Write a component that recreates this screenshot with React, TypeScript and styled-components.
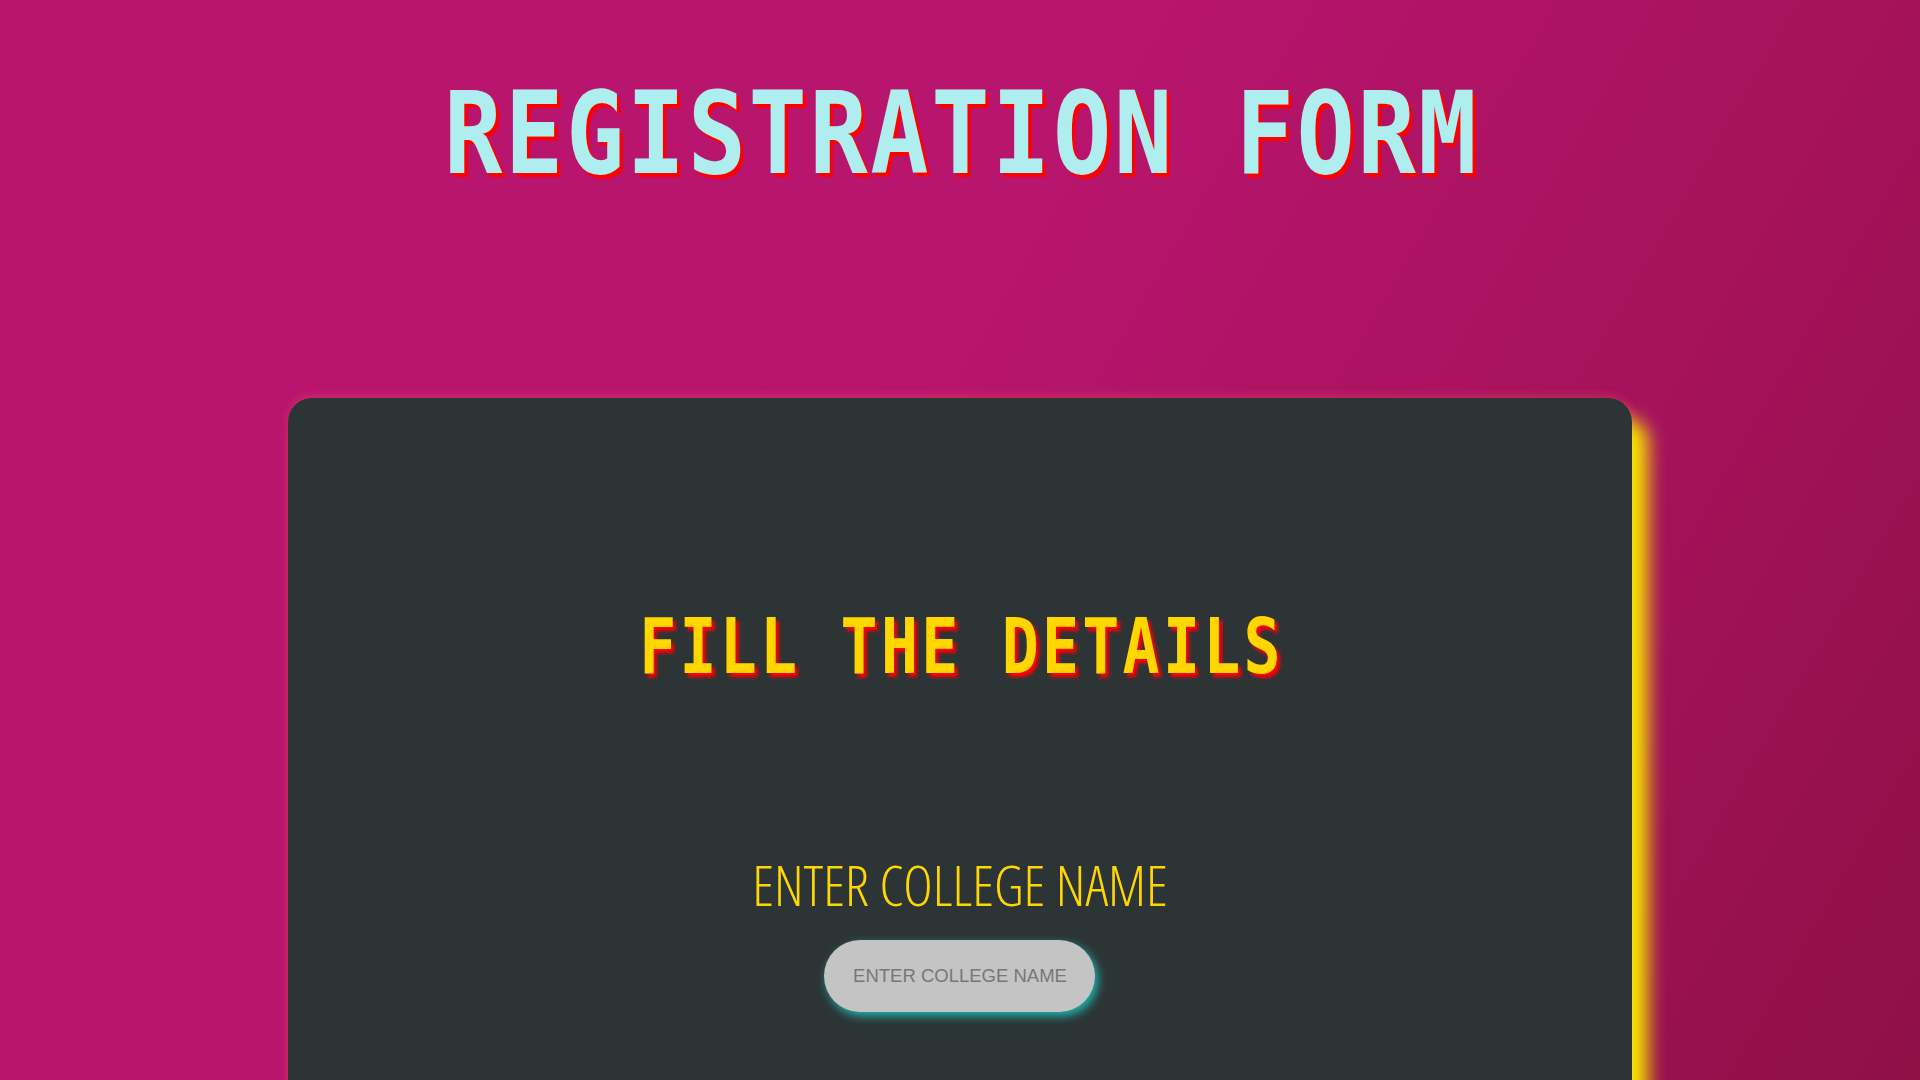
import React, { useState } from 'react';
import styled, { createGlobalStyle } from 'styled-components';

const GlobalStyle = createGlobalStyle`
  html, body {
    margin: 0;
    padding: 0;
  }
  body {
    background: linear-gradient(120deg, #b9156f 0%, #b8156e 45%, #a5125b 75%, #8e1045 100%);
    background-attachment: fixed;
    min-height: 100vh;
  }
`;

const Page = styled.div`
  min-height: 100vh;
  display: flex;
  flex-direction: column;
  align-items: center;
  padding-top: 77px;
`;

const Title = styled.h1`
  margin: 0;
  font-family: 'DejaVu Sans Mono', 'Liberation Mono', monospace;
  font-weight: 700;
  font-size: 114px;
  line-height: 1;
  letter-spacing: 3px;
  padding-left: 3px;
  color: #afeeee;
  text-shadow: 4px 4px 1px #ff0000;
  transform: scaleX(0.85);
  white-space: nowrap;
`;

const Card = styled.section`
  box-sizing: border-box;
  width: 70%;
  margin-top: 207px;
  background: #2d3436;
  border-radius: 24px;
  box-shadow: 16px 20px 18px #f8e400, 0 -2px 8px rgba(255, 90, 90, 0.35);
  display: flex;
  flex-direction: column;
  align-items: center;
  padding: 210px 0 220px;
`;

const Heading = styled.h2`
  margin: 0;
  font-family: 'DejaVu Sans Mono', 'Liberation Mono', monospace;
  font-weight: 700;
  font-size: 77px;
  line-height: 1;
  letter-spacing: 4px;
  padding-left: 4px;
  color: #ffd700;
  text-shadow: 4px 4px 4px #ff0000;
  transform: scaleX(0.8);
  white-space: nowrap;
`;

const Field = styled.div`
  margin-top: 171px;
  display: flex;
  flex-direction: column;
  align-items: center;
  gap: 28px;
`;

const Label = styled.label`
  font-family: 'Open Sans', 'Liberation Sans', sans-serif;
  font-weight: 300;
  font-stretch: 75%;
  font-size: 56px;
  line-height: 1;
  color: #ffd700;
`;

const Input = styled.input`
  box-sizing: border-box;
  width: 271px;
  height: 72px;
  border: none;
  outline: none;
  border-radius: 36px;
  background: #c4c4c4;
  box-shadow: 3px 4px 10px #1fb5ad;
  font-family: 'Liberation Sans', Arial, sans-serif;
  font-size: 18.5px;
  color: #333;
  text-align: center;
  padding: 0 16px;

  &::placeholder {
    color: #777;
  }
`;

const App = (): JSX.Element => {
  const [college, setCollege] = useState<string>('');

  return (
    <>
      <GlobalStyle />
      <Page>
        <Title>REGISTRATION FORM</Title>
        <Card>
          <Heading>FILL THE DETAILS</Heading>
          <Field>
            <Label htmlFor="college">ENTER COLLEGE NAME</Label>
            <Input
              id="college"
              type="text"
              placeholder="ENTER COLLEGE NAME"
              value={college}
              onChange={(e) => setCollege(e.target.value)}
            />
          </Field>
        </Card>
      </Page>
    </>
  );
};

export default App;
